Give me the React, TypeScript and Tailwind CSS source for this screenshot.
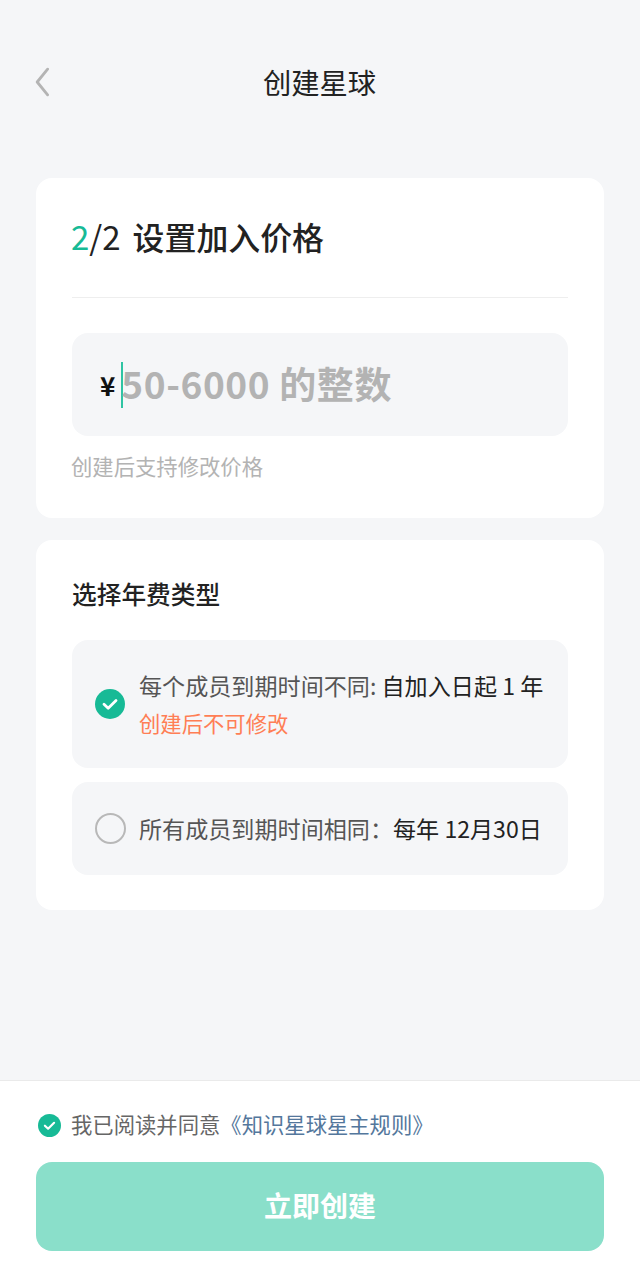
const Check = ({ size }: { size: number }) => (
  <svg width={size} height={size} viewBox="0 0 30 30" className="shrink-0">
    <circle cx="15" cy="15" r="15" fill="#17ba96" />
    <path d="M9 15.2l4.2 4L21 11.5" fill="none" stroke="#fff" strokeWidth="2.8" strokeLinecap="round" strokeLinejoin="round" />
  </svg>
);

export default function App() {
  return (
    <div className="flex flex-col h-[1280px] bg-[#f5f6f8] text-[#222222] font-['Noto_Sans_CJK_SC','Noto_Sans',sans-serif]">
      <div className="flex items-center h-[40px] mt-[62px] pl-[35px] pr-[36px]">
        <svg width="14" height="30" viewBox="0 0 14 30" className="shrink-0">
          <path d="M12.6 2.2L2.2 15l10.4 12.8" fill="none" stroke="#b4b4b4" strokeWidth="2.8" strokeLinecap="round" strokeLinejoin="round" />
        </svg>
        <div className="flex-1 text-center text-[28.3px] leading-[40px] pr-[14px]">创建星球</div>
      </div>

      <div className="mt-[76px] mx-[36px] bg-white rounded-[16px] px-[36px] h-[340px]">
        <div className="flex items-center h-[120px] border-b border-[#eeeeee] pb-[3px]">
          <span className="text-[33px] leading-[44px] ml-[-1px]">
            <span className="text-[#17ba96]">2</span>/2
          </span>
          <span className="text-[31.9px] leading-[44px] font-medium ml-[12px]">设置加入价格</span>
        </div>
        <div className="mt-[35px] h-[103px] bg-[#f5f6f8] rounded-[16px] flex items-center pl-[28px]">
          <span className="text-[26px] leading-[36px] font-bold text-[#111111]">¥</span>
          <span className="w-[2px] h-[46px] bg-[#2fc4a3] ml-[6px]"></span>
          <span className="text-[37px] leading-[50px] font-bold text-[#b3b3b3] tracking-[0.6px] ml-[-2px] pb-[4px]">50-6000 的整数</span>
        </div>
        <div className="mt-[15px] ml-[-1px] text-[21.33px] leading-[30px] text-[#b3b3b3]">创建后支持修改价格</div>
      </div>

      <div className="mt-[22px] mx-[36px] bg-white rounded-[16px] px-[36px] h-[370px]">
        <div className="pt-[36px] text-[24.7px] leading-[35px] font-medium">选择年费类型</div>
        <div className="mt-[29px] h-[128px] bg-[#f5f6f8] rounded-[16px] flex items-center pl-[23px]">
          <Check size={30} />
          <div className="ml-[14px] text-[23.1px] leading-[37px]">
            <div>
              <span className="text-[#555555]">每个成员到期时间不同: </span>自加入日起 1 年
            </div>
            <div className="text-[#ff7e55] text-[21.33px]">创建后不可修改</div>
          </div>
        </div>
        <div className="mt-[14px] h-[93px] bg-[#f5f6f8] rounded-[16px] flex items-center pl-[23px]">
          <span className="w-[31px] h-[31px] rounded-full border-2 border-[#b8b8b8] shrink-0"></span>
          <div className="ml-[13px] text-[23.1px] leading-[37px]">
            <span className="text-[#555555]">所有成员到期时间相同：</span>每年 12月30日
          </div>
        </div>
      </div>

      <div className="mt-auto h-[200px] bg-white border-t border-[#eaeaea] px-[36px]">
        <div className="flex items-center mt-[28px] h-[32px] pl-[2px]">
          <Check size={23} />
          <span className="ml-[10px] text-[21.33px] leading-[32px] text-[#666666] pb-[2px]">我已阅读并同意</span>
          <span className="text-[21.33px] leading-[32px] text-[#54779c] pb-[2px]">《知识星球星主规则》</span>
        </div>
        <div className="mt-[21px] h-[89px] rounded-[16px] bg-[#8adfca] flex items-center justify-center text-white text-[28px] font-bold pb-[3px]">立即创建</div>
      </div>
    </div>
  );
}
